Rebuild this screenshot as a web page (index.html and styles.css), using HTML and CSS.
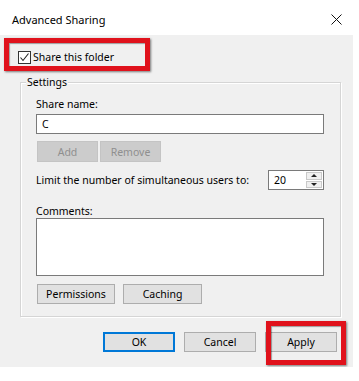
FILE: index.html
```html
<!DOCTYPE html>
<html>
<head>
<meta charset="utf-8">
<link rel="stylesheet" href="styles.css">
</head>
<body>
<div class="window">
  <div class="titlebar">
    <span class="title">Advanced Sharing</span>
    <svg class="close" width="11" height="11" viewBox="0 0 11 11"><path d="M0.5 0.5L10.5 10.5M10.5 0.5L0.5 10.5" stroke="#111" stroke-width="1" fill="none"/></svg>
  </div>
  <div class="panel">
    <div class="share-row">
      <span class="checkbox"><svg width="11" height="11" viewBox="0 0 11 11"><path d="M1.5 5.5L4 8.5L9.5 1.5" stroke="#222" stroke-width="1.1" fill="none"/></svg></span>
      <span>Share this folder</span>
    </div>
    <fieldset class="group">
      <legend class="legend">Settings</legend>
      <div class="inner">
        <div class="label">Share name:</div>
        <div class="input">C</div>
        <div class="btn-row small">
          <button class="btn disabled btn-add" disabled>Add</button>
          <button class="btn disabled" disabled>Remove</button>
        </div>
        <div class="limit-row">
          <span>Limit the number of simultaneous users to:</span>
          <div class="spin">
            <span class="spin-val">20</span>
            <div class="spin-btns">
              <span class="spin-btn"><span class="arrow up"></span></span>
              <span class="spin-btn"><span class="arrow down"></span></span>
            </div>
          </div>
        </div>
        <div class="label comments">Comments:</div>
        <div class="textarea"></div>
        <div class="btn-row wide">
          <button class="btn btn-perm">Permissions</button>
          <button class="btn btn-cache">Caching</button>
        </div>
      </div>
    </fieldset>
    <div class="footer">
      <button class="btn dlg default">OK</button>
      <button class="btn dlg">Cancel</button>
      <button class="btn dlg">Apply</button>
    </div>
    <div class="highlight h1"></div>
    <div class="highlight h2"></div>
  </div>
</div>
</body>
</html>
```

FILE: styles.css
```css
body {
  margin: 0;
  background: #ffffff;
  font-family: "Noto Sans", "Liberation Sans", sans-serif;
  font-size: 10.5px;
  color: #000;
}

.window {
  width: 359px;
}

.titlebar {
  height: 35px;
  display: flex;
  justify-content: space-between;
  align-items: flex-start;
  padding: 0 17px 0 12px;
  box-sizing: border-box;
  background: #fff;
}

.title {
  font-size: 11px;
  line-height: 15px;
  margin-top: 12px;
}

.close {
  margin-top: 14px;
  display: block;
}

.panel {
  position: relative;
  width: 353px;
  height: 332px;
  box-sizing: border-box;
  background: #f0f0f0;
  padding-top: 16px;
}

.share-row {
  display: flex;
  align-items: center;
  gap: 2px;
  margin-left: 18px;
  height: 13px;
  line-height: 13px;
}

.checkbox {
  width: 13px;
  height: 13px;
  box-sizing: border-box;
  border: 1px solid #333;
  background: #fff;
  display: flex;
  align-items: center;
  justify-content: center;
}

.checkbox svg {
  display: block;
}

.group {
  margin: 11px 0 0 20px;
  width: 321px;
  box-sizing: border-box;
  border: 1px solid #d5d5d5;
  box-shadow: inset 1px 1px 0 #fff, 1px 1px 0 #fff;
  padding: 0;
  min-width: 0;
}

.legend {
  margin-left: 5px;
  padding: 0 1px;
  line-height: 14px;
  background: #f0f0f0;
}

.inner {
  padding: 9px 16px 12px 15px;
}

.label {
  line-height: 13px;
}

.input {
  margin-top: 3px;
  height: 20px;
  box-sizing: border-box;
  border: 1px solid #7a7a7a;
  background: #fff;
  padding-left: 5px;
  line-height: 18px;
}

.btn-row {
  display: flex;
}

.btn-row.small {
  gap: 2px;
  margin-top: 7px;
  padding-left: 1px;
}

.btn-row.wide {
  gap: 8px;
  margin-top: 8px;
  padding-left: 1px;
}

.btn {
  font-family: inherit;
  font-size: 10.5px;
  color: #000;
  margin: 0;
  padding: 0;
  height: 20px;
  box-sizing: border-box;
  background: #e1e1e1;
  border: 1px solid #adadad;
  line-height: 18px;
}

.btn.disabled {
  width: 61px;
  height: 21px;
  background: #cccccc;
  border-color: #c4c4c4;
  color: #8f8f8f;
}

.btn-perm {
  width: 78px;
}

.btn-cache {
  width: 79px;
}

.limit-row {
  margin-top: 8px;
  display: flex;
  justify-content: space-between;
  align-items: center;
}

.spin {
  width: 56px;
  height: 20px;
  box-sizing: border-box;
  border: 1px solid #7a7a7a;
  background: #fff;
  display: flex;
  align-items: center;
}

.spin-val {
  padding-left: 5px;
  line-height: 18px;
}

.spin-btns {
  margin-left: auto;
  margin-right: 1px;
  width: 16px;
  height: 16px;
  display: flex;
  flex-direction: column;
  gap: 1px;
}

.spin-btn {
  flex: 1;
  background: #f0f0f0;
  border: 1px solid #c9c9c9;
  display: flex;
  align-items: center;
  justify-content: center;
}

.arrow {
  width: 0;
  height: 0;
  border-left: 3px solid transparent;
  border-right: 3px solid transparent;
}

.arrow.up {
  border-bottom: 3px solid #222;
}

.arrow.down {
  border-top: 3px solid #222;
}

.comments {
  margin-top: 15px;
}

.textarea {
  height: 58px;
  box-sizing: border-box;
  border: 1px solid #7a7a7a;
  background: #fff;
}

.footer {
  margin-top: 15px;
  display: flex;
  justify-content: flex-end;
  gap: 9px;
  padding-right: 16px;
}

.btn.dlg {
  width: 72px;
}

.btn.default {
  border-color: #0078d7;
  box-shadow: inset 0 0 0 1px #0078d7;
}

.highlight {
  position: absolute;
  box-sizing: border-box;
  border: 5px solid #e0121c;
  box-shadow: 1px 1px 2px rgba(0, 0, 0, 0.5), inset 1px 1px 1px rgba(0, 0, 0, 0.35);
}

.h1 {
  top: 3px;
  left: 4px;
  width: 146px;
  height: 33px;
}

.h2 {
  top: 286px;
  left: 266px;
  width: 80px;
  height: 44px;
}
```
